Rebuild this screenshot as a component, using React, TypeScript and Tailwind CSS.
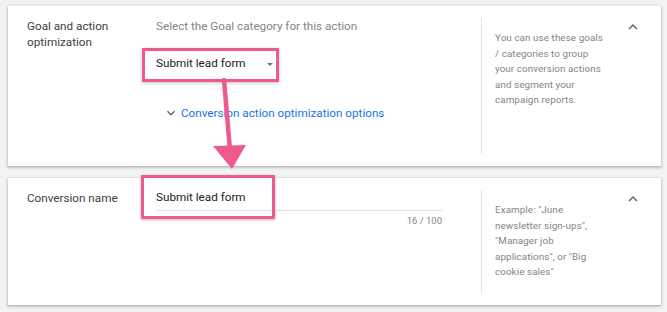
import React from 'react';

const ChevronUp: React.FC = () => (
    <svg width="18" height="18" viewBox="0 0 24 24" className="shrink-0">
        <path d="M12 8l-6 6 1.41 1.41L12 10.83l4.59 4.58L18 14z" fill="#5f6368" />
    </svg>
);

const ChevronDown: React.FC = () => (
    <svg width="16" height="16" viewBox="0 0 24 24" className="shrink-0">
        <path d="M16.59 8.59L12 13.17 7.41 8.59 6 10l6 6 6-6z" fill="#5f6368" />
    </svg>
);

const Highlight: React.FC<{ className: string }> = ({ className }) => (
    <div className={`absolute border-[3px] border-[#f0598c] shadow-[0_1px_3px_rgba(0,0,0,0.25)] pointer-events-none ${className}`} />
);

const App: React.FC = () => {
    return (
        <div className="relative min-h-screen bg-[#f1f3f4] pl-[8px] pr-[6px] pt-[6px] font-['Roboto',sans-serif] text-[11.7px]">
            <div className="flex flex-col gap-[12px]">
                {/* Goal card */}
                <div className="flex h-[160px] bg-white pl-[19px] shadow-[0_1px_2px_0_rgba(60,64,67,0.3),0_1px_3px_1px_rgba(60,64,67,0.15)]">
                    <div className="w-[129px] pt-[12px] leading-[16px] text-[#3c4043]">
                        Goal and action
                        <br />
                        optimization
                    </div>
                    <div className="w-[325px] pt-[12px]">
                        <div className="leading-[16px] text-[#80868b]">Select the Goal category for this action</div>
                        <div className="relative mt-[16px] flex h-[28px] w-[117px] items-center justify-between">
                            <span className="text-[#202124]">Submit lead form</span>
                            <span className="h-0 w-0 border-x-[3.5px] border-t-[3.5px] border-x-transparent border-t-[#757575]" />
                            <Highlight className="-left-[14px] -top-[2px] h-[34px] w-[137px]" />
                        </div>
                        <div className="ml-[7px] mt-[27px] flex items-center gap-[2px] leading-[16px] text-[#1a73e8]">
                            <ChevronDown />
                            <span>Conversion action optimization options</span>
                        </div>
                    </div>
                    <div className="my-[12px] w-px bg-[#e3e3e3]" />
                    <div className="ml-[13px] w-[108px] pt-[24px] text-[9.8px] leading-[15.5px] tracking-[0.1px] text-[#80868b]">
                        You can use these goals / categories to group your conversion actions and segment your campaign reports.
                    </div>
                    <div className="ml-[21px] pt-[12px]">
                        <ChevronUp />
                    </div>
                </div>

                {/* Conversion name card */}
                <div className="flex h-[127px] bg-white pl-[19px] shadow-[0_1px_2px_0_rgba(60,64,67,0.3),0_1px_3px_1px_rgba(60,64,67,0.15)]">
                    <div className="w-[129px] pt-[12px] leading-[16px] text-[#3c4043]">Conversion name</div>
                    <div className="w-[325px] pt-[11px]">
                        <div className="relative w-[286px]">
                            <div className="border-b border-[#e0e0e0] pb-[5px] leading-[16px] text-[#202124]">Submit lead form</div>
                            <div className="mt-[4px] text-right text-[9.5px] leading-[12px] text-[#80868b]">16 / 100</div>
                            <Highlight className="-left-[15px] -top-[14px] h-[44px] w-[134px]" />
                        </div>
                    </div>
                    <div className="my-[12px] w-px bg-[#e3e3e3]" />
                    <div className="ml-[13px] w-[108px] pt-[24px] text-[9.8px] leading-[15.5px] tracking-[0.1px] text-[#80868b]">
                        Example: "June newsletter sign-ups", "Manager job applications", or "Big cookie sales"
                    </div>
                    <div className="ml-[21px] pt-[12px]">
                        <ChevronUp />
                    </div>
                </div>
            </div>

            {/* annotation arrow */}
            <svg className="pointer-events-none absolute left-0 top-0" width="667" height="312" viewBox="0 0 667 312">
                <line x1="224" y1="80" x2="230" y2="150" stroke="#f0598c" strokeWidth="4.5" strokeLinecap="round" />
                <polygon points="213,146 246,145 232,169" fill="#f0598c" />
            </svg>
        </div>
    );
};

export default App;
